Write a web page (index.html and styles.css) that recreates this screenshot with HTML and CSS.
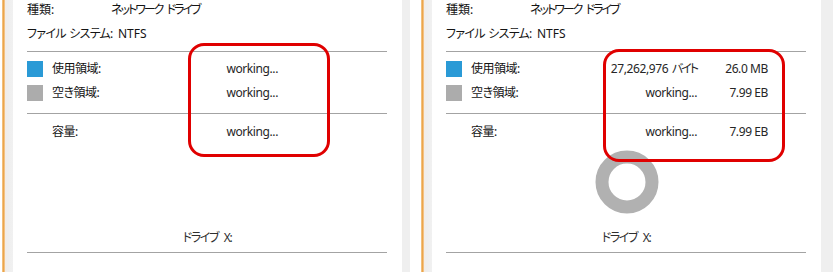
FILE: index.html
```html
<!DOCTYPE html>
<html lang="ja">
<head>
	<meta charset="utf-8">
	<title>ドライブ X: のプロパティ</title>
	<link rel="stylesheet" href="styles.css">
</head>
<body>
	<div class="screen">
		<!-- 計算中 -->
		<section class="panel">
			<div class="edge"></div>
			<div class="shade"></div>
			<div class="sheet">
				<div class="row"><span class="key key-type">種類:</span><span class="kana">ネットワーク ドライブ</span></div>
				<div class="row row-fs"><span class="key key-fs">ファイル システム:</span><span>NTFS</span></div>
				<hr class="rule">
				<div class="row row-used"><i class="swatch used"></i><span class="label">使用領域:</span><span class="bytes">working...</span><span class="size"></span></div>
				<div class="row row-free"><i class="swatch free"></i><span class="label">空き領域:</span><span class="bytes">working...</span><span class="size"></span></div>
				<hr class="rule rule-mid">
				<div class="row row-cap"><i class="swatch"></i><span class="label">容量:</span><span class="bytes">working...</span><span class="size"></span></div>
				<div class="chart"></div>
				<div class="drive">ドライブ X:</div>
				<hr class="rule rule-bottom">
				<div class="mark mark-a"></div>
			</div>
			<div class="shade-r"></div>
		</section>

		<!-- 使用領域だけ取得済み -->
		<section class="panel">
			<div class="edge"></div>
			<div class="shade"></div>
			<div class="sheet">
				<div class="row"><span class="key key-type">種類:</span><span class="kana">ネットワーク ドライブ</span></div>
				<div class="row row-fs"><span class="key key-fs">ファイル システム:</span><span>NTFS</span></div>
				<hr class="rule">
				<div class="row row-used"><i class="swatch used"></i><span class="label">使用領域:</span><span class="bytes">27,262,976 <span class="unit">バイト</span></span><span class="size">26.0 MB</span></div>
				<div class="row row-free"><i class="swatch free"></i><span class="label">空き領域:</span><span class="bytes">working...</span><span class="size">7.99 EB</span></div>
				<hr class="rule rule-mid">
				<div class="row row-cap"><i class="swatch"></i><span class="label">容量:</span><span class="bytes">working...</span><span class="size">7.99 EB</span></div>
				<div class="chart">
					<svg class="donut" width="64" height="64" viewBox="0 0 64 64">
						<circle cx="32" cy="32" r="25" fill="none" stroke="#b1b1b1" stroke-width="13"/>
					</svg>
				</div>
				<div class="drive">ドライブ X:</div>
				<hr class="rule rule-bottom">
				<div class="mark mark-b"></div>
			</div>
			<div class="shade-r"></div>
		</section>
	</div>
</body>
</html>
```

FILE: styles.css
```css
* {
	box-sizing: border-box;
}
html, body {
	margin: 0;
	padding: 0;
	background: #fff;
}
body {
	font-family: "Noto Sans", "Noto Sans CJK JP", sans-serif;
	font-size: 12px;
	font-feature-settings: "palt";
	color: #141414;
}
.screen {
	display: flex;
	gap: 11px;
	width: 833px;
	height: 272px;
	padding-left: 2px;
	overflow: hidden;
}
.panel {
	display: flex;
	flex-shrink: 0;
	height: 272px;
}
.edge {
	width: 3px;
	background: linear-gradient(to right, #f6cf97, #eba449 45%, #eda955 70%, #f9e0bd);
}
.shade {
	width: 8px;
	background: linear-gradient(to right, #f3ece6, #eeeeee 40%, #f1f1f1);
}
.shade-r {
	width: 8px;
	background: #efefef;
}
.panel:last-child .shade-r {
	width: 14px;
}
.sheet {
	position: relative;
	width: 389px;
	padding-left: 14px;
}

/* 行 */
.row {
	display: flex;
	align-items: center;
	height: 20px;
	line-height: 20px;
	white-space: pre;
}
.row > span {
	flex-shrink: 0;
}
.row-fs {
	margin-top: 4px;
}
.key-type {
	width: 84px;
}
.key-fs {
	width: 91px;
	letter-spacing: -0.7px;
	word-spacing: 1px;
}
.kana {
	letter-spacing: -2px;
	word-spacing: 3px;
}
.rule {
	width: 360px;
	height: 1px;
	margin: 7px 0 0;
	border: 0;
	background: #a3a3a3;
}
.row-used {
	margin-top: 7px;
}
.row-free {
	margin-top: 4px;
}
.rule-mid {
	margin-top: 10px;
}
.row-cap {
	margin-top: 8px;
}
.swatch {
	display: block;
	flex-shrink: 0;
	width: 16px;
	height: 16px;
	margin-right: 9px;
}
.swatch.used {
	background: #2a9ad6;
}
.swatch.free {
	background: #acacac;
}
.label {
	width: 125px;
	letter-spacing: -0.5px;
}
.bytes {
	width: 101px;
	text-align: right;
	letter-spacing: -0.4px;
	color: #262626;
}
.unit {
	letter-spacing: -2px;
	padding-left: 1px;
}
.size {
	width: 71px;
	text-align: right;
	letter-spacing: -0.4px;
	color: #262626;
}

/* グラフ */
.chart {
	display: flex;
	justify-content: center;
	width: 360px;
	height: 64px;
	margin-top: 8px;
	padding-left: 2px;
}
.donut {
	display: block;
}
.drive {
	width: 360px;
	height: 20px;
	margin-top: 14px;
	line-height: 20px;
	text-align: center;
	white-space: pre;
	letter-spacing: -1.4px;
	word-spacing: 4px;
	color: #2e2e2e;
}
.rule-bottom {
	margin-top: 4px;
}

/* 赤枠 */
.mark {
	position: absolute;
	border: 3px solid #e00000;
	border-radius: 16px;
}
.mark-a {
	left: 175px;
	top: 43px;
	width: 142px;
	height: 114px;
}
.mark-b {
	left: 171px;
	top: 49px;
	width: 182px;
	height: 113px;
}
```
